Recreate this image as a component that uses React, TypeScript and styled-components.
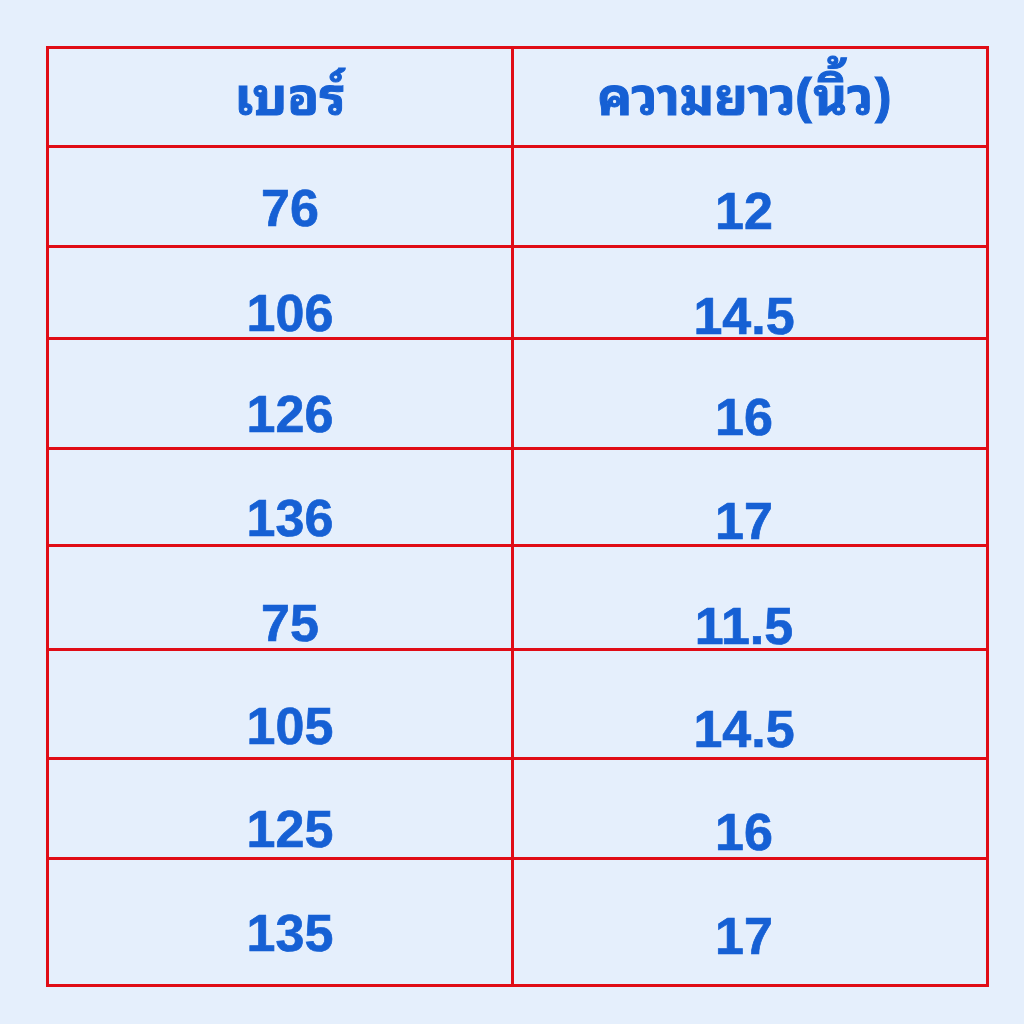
import * as React from 'react';
import styled, { createGlobalStyle } from 'styled-components';

const GlobalStyle = createGlobalStyle`
    html, body {
        margin: 0;
        padding: 0;
        background: #e5effc;
    }
    * {
        box-sizing: border-box;
    }
`;

const RED = '#e00c16';
const BLUE = '#1660d4';

const Page = styled.div`
    width: 1024px;
    height: 1024px;
    padding: 46px 35px 0 46px;
    background: #e5effc;
`;

const Table = styled.div`
    width: 943px;
    border: 3px solid ${RED};
    display: flex;
    flex-direction: column;
`;

const Row: any = styled.div`
    display: grid;
    grid-template-columns: 462px 1fr;
    height: ${(props: any) => props.h}px;
    border-bottom: ${(props: any) => props.last ? 'none' : `3px solid ${RED}`};
`;

const Cell: any = styled.div`
    padding-top: ${(props: any) => props.top}px;
    padding-left: ${(props: any) => props.right ? 0 : 20}px;
    padding-right: ${(props: any) => props.right ? 12 : 0}px;
    border-left: ${(props: any) => props.right ? `3px solid ${RED}` : 'none'};
    text-align: center;
    color: ${BLUE};
    font-family: "Liberation Sans", Arial, sans-serif;
    font-weight: 700;
    font-size: 52px;
    line-height: 52px;
    white-space: nowrap;
    -webkit-text-stroke: 0.7px ${BLUE};
`;

const HeadCell: any = styled(Cell)`
    font-family: "Noto Sans Thai Looped", "Noto Sans Thai", "Loma", "Garuda", "Noto Sans", sans-serif;
    font-size: 52px;
    line-height: 52px;
    -webkit-text-stroke: 1px ${BLUE};
`;

const rows = [
    { size: '76', length: '12', h: 100, top: 34 },
    { size: '106', length: '14.5', h: 92, top: 39 },
    { size: '126', length: '16', h: 110, top: 48 },
    { size: '136', length: '17', h: 97, top: 42 },
    { size: '75', length: '11.5', h: 104, top: 50 },
    { size: '105', length: '14.5', h: 109, top: 49 },
    { size: '125', length: '16', h: 100, top: 43 },
    { size: '135', length: '17', h: 124, top: 47 },
];

export default function App() {
    return (
        <Page>
            <GlobalStyle />
            <Table>
                <Row h={99}>
                    <HeadCell top={17}>เบอร์</HeadCell>
                    <HeadCell top={17} right>ความยาว(นิ้ว)</HeadCell>
                </Row>
                {rows.map((row, i) => (
                    <Row key={i} h={row.h} last={i === rows.length - 1}>
                        <Cell top={row.top}>{row.size}</Cell>
                        <Cell top={row.top + 3} right>{row.length}</Cell>
                    </Row>
                ))}
            </Table>
        </Page>
    );
}
